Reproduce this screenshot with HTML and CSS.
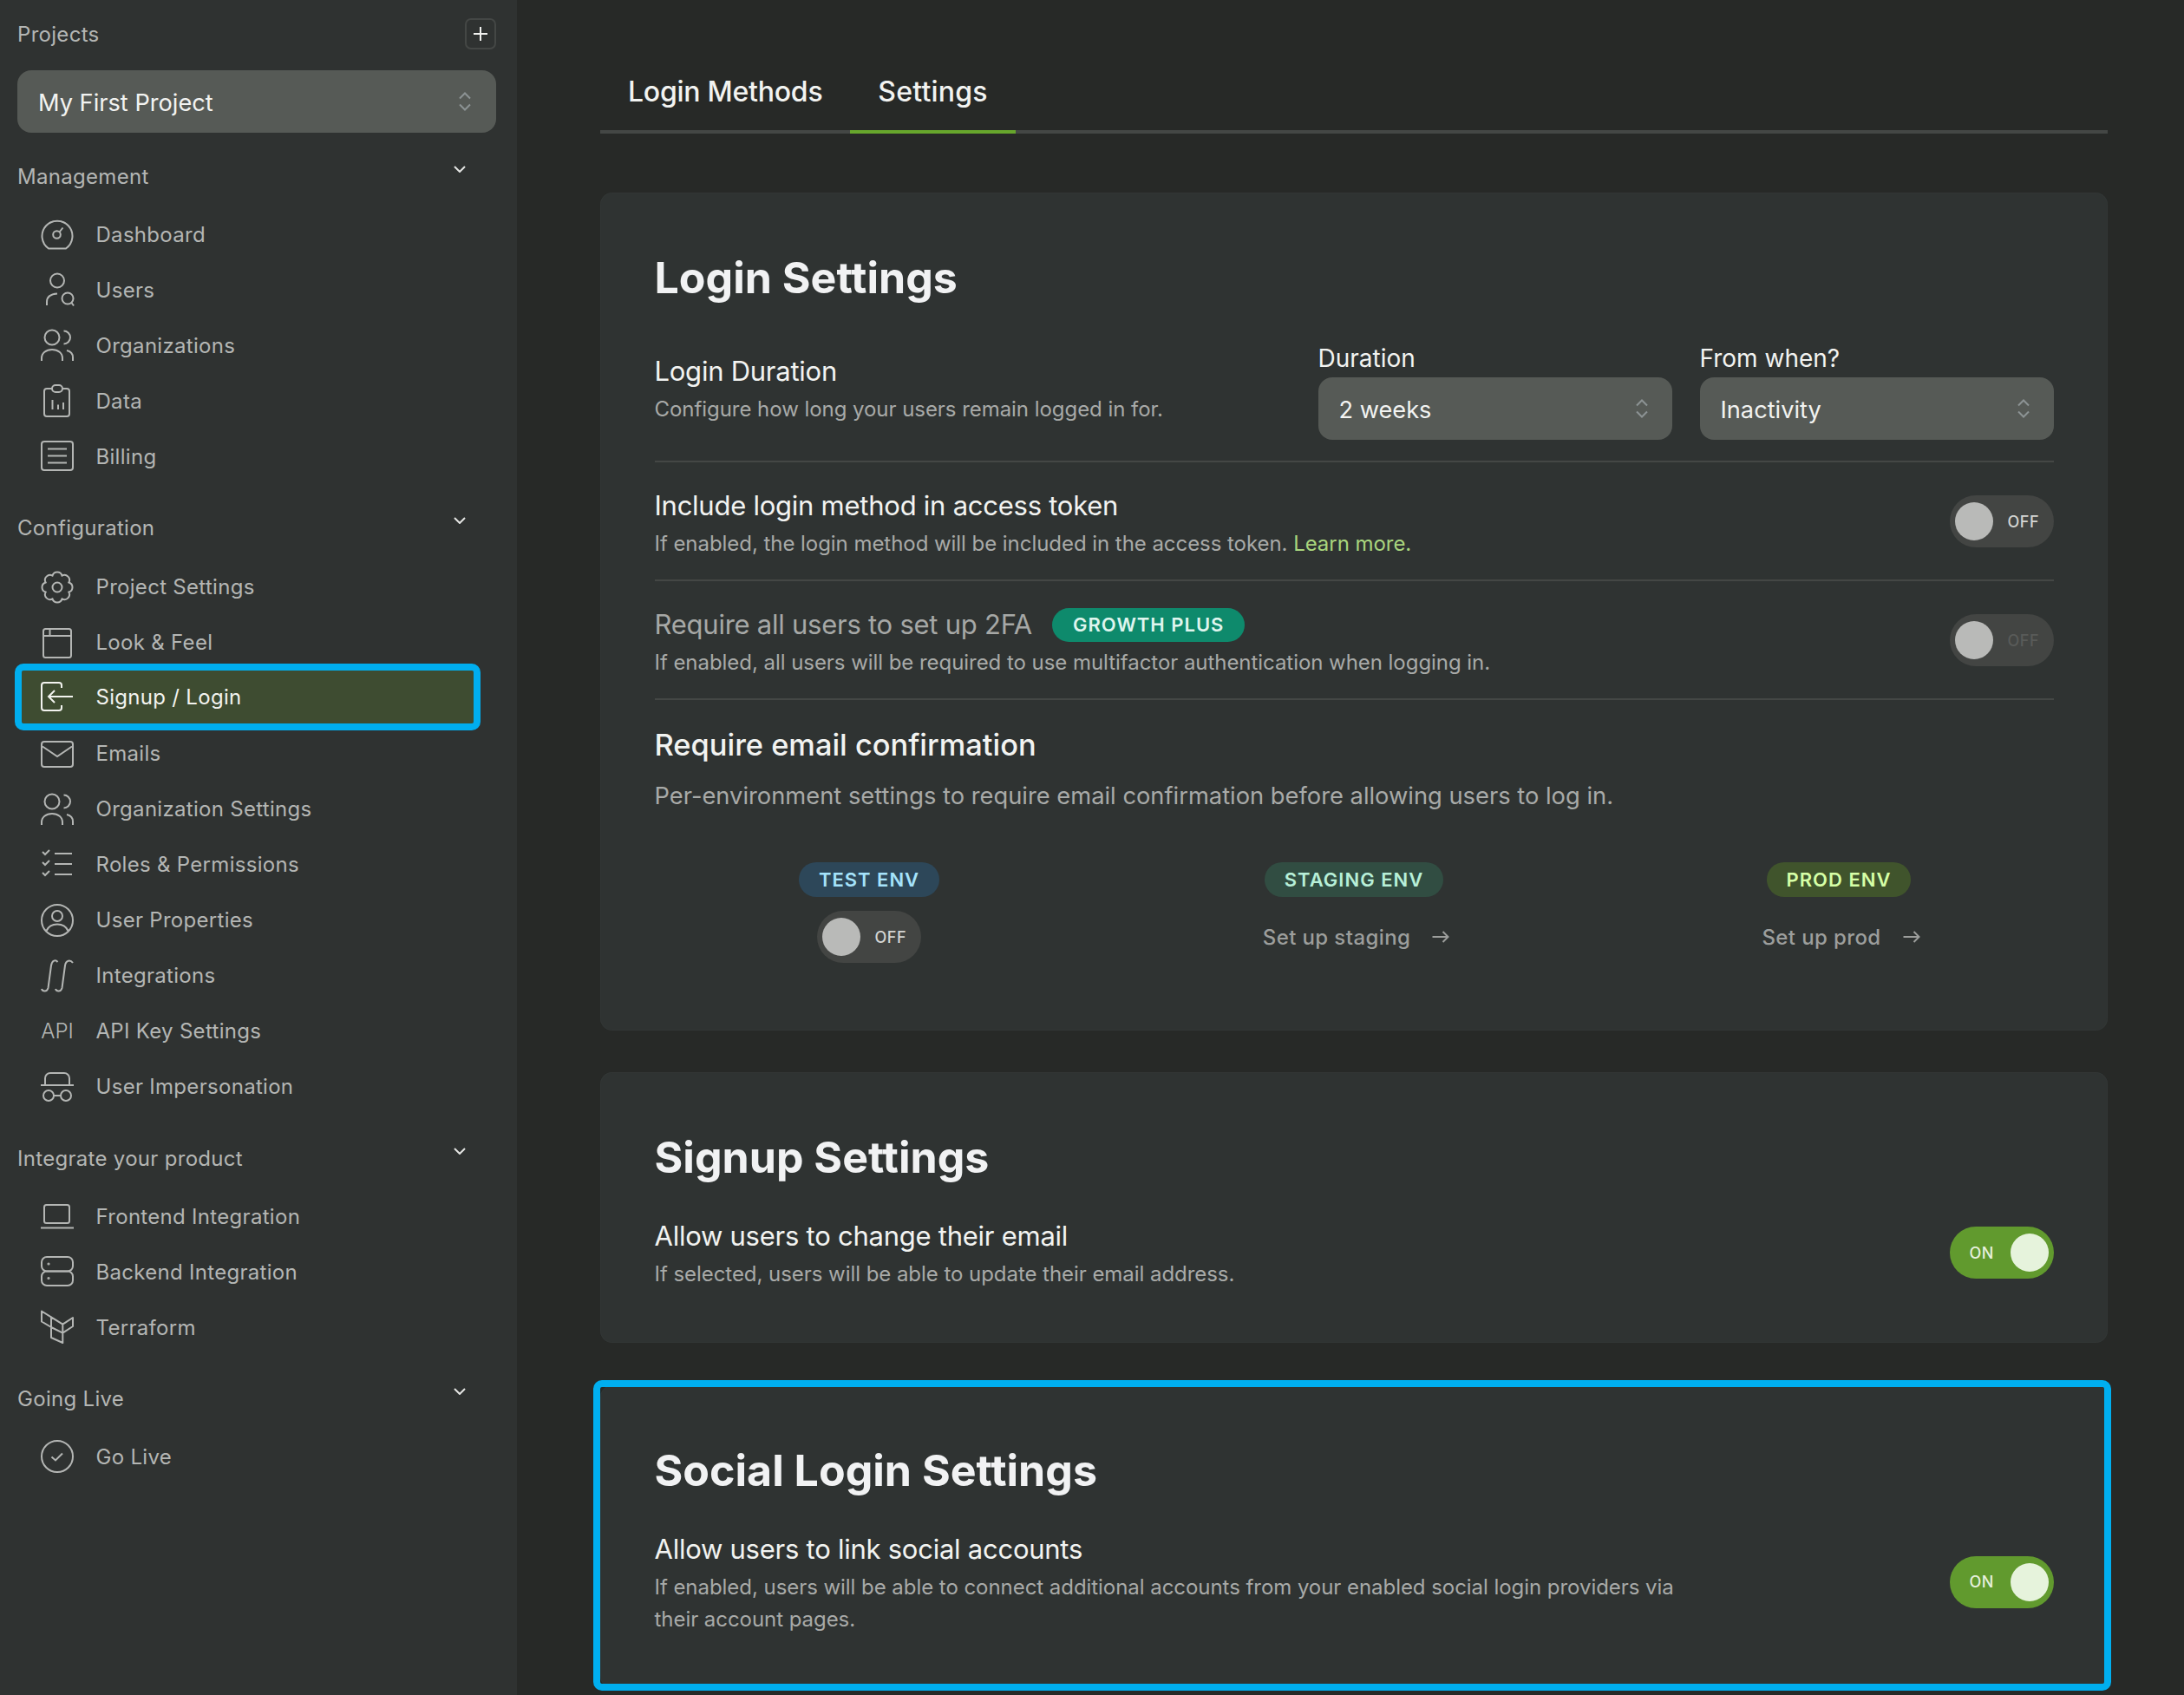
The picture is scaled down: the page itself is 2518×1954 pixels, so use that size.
FILE: index.html
```html
<!DOCTYPE html>
<html lang="en">
<head>
<meta charset="utf-8">
<title>Signup / Login Settings</title>
<link rel="stylesheet" href="styles.css">
</head>
<body>
<aside class="sidebar">
  <div class="projects-head">
    <span class="projects-label">Projects</span>
    <button class="add-btn"><svg viewBox="0 0 18 18" class="plus"><path d="M9 1V17M1 9H17"/></svg></button>
  </div>
  <div class="select select-project">
    <span>My First Project</span>
    <svg class="updown" viewBox="0 0 14 22"><path d="M1 7.5L7 1.5L13 7.5M1 14.500L7 20.500L13 14.500"/></svg>
  </div>

  <div class="section-head"><span>Management</span><svg class="chev" viewBox="0 0 14 8"><path d="M1 1L7 7L13 1"/></svg></div>
  <a class="nav"><svg class="ico" viewBox="0 0 38 38"><path d="M9 35.500A17.500 17.500 0 1 1 29 35.500Z"/><circle cx="18.500" cy="19.500" r="4.300"/><path d="M21.500 16.500L25.500 11.500"/></svg><span>Dashboard</span></a>
  <a class="nav"><svg class="ico" viewBox="0 0 38 38"><circle cx="19" cy="8.500" r="8"/><path d="M7 37V33C7 27 12 24 19 23.500"/><circle cx="31" cy="29" r="6.500"/><path d="M35.500 34L38 37.500"/></svg><span>Users</span></a>
  <a class="nav"><svg class="ico" viewBox="0 0 38 38"><circle cx="13" cy="10" r="8.500"/><path d="M26.500 2.500A7.500 7.500 0 0 1 26.500 17.500M1 37V34C1 28 6 24 13 24S25 28 25 34V37M30 25C34 26 37 29 37 33V37"/></svg><span>Organizations</span></a>
  <a class="nav"><svg class="ico" viewBox="0 0 38 38"><path d="M13 5H7A3 3 0 0 0 4 8V34A3 3 0 0 0 7 37H30A3 3 0 0 0 33 34V8A3 3 0 0 0 30 5H25"/><rect x="13" y="1" width="12" height="8" rx="4"/><path d="M13.500 18V29M20 23.500V29M26 21V29"/></svg><span>Data</span></a>
  <a class="nav"><svg class="ico" viewBox="0 0 38 38"><rect x="1" y="2" width="36" height="33" rx="3"/><path d="M8 10.500H30M8 18.500H30M8 26.500H30"/></svg><span>Billing</span></a>

  <div class="section-head section-config"><span>Configuration</span><svg class="chev" viewBox="0 0 14 8"><path d="M1 1L7 7L13 1"/></svg></div>
  <a class="nav"><svg class="ico" viewBox="0 0 38 38"><path d="M13.450 5.600A5.800 5.800 0 0 1 24.550 5.600A5.800 5.800 0 0 1 32.400 13.450A5.800 5.800 0 0 1 32.400 24.550A5.800 5.800 0 0 1 24.550 32.400A5.800 5.800 0 0 1 13.450 32.400A5.800 5.800 0 0 1 5.600 24.550A5.800 5.800 0 0 1 5.600 13.450A5.800 5.800 0 0 1 13.450 5.600Z"/><circle cx="19" cy="19" r="5.500"/></svg><span>Project Settings</span></a>
  <a class="nav"><svg class="ico" viewBox="0 0 38 38"><rect x="3" y="3" width="32" height="33" rx="2.500"/><path d="M3 11H35M10.500 3V11"/></svg><span>Look &amp; Feel</span></a>
  <a class="nav nav-active"><svg class="ico" viewBox="0 0 38 38"><path d="M24 9V6A3 3 0 0 0 21 3H4A3 3 0 0 0 1 6V32A3 3 0 0 0 4 35H21A3 3 0 0 0 24 32V29M37 19H9M16 12L9 19L16 26"/></svg><span>Signup / Login</span></a>
  <a class="nav"><svg class="ico" viewBox="0 0 38 38"><rect x="1" y="5" width="36" height="29" rx="3"/><path d="M2 10.500L19 22L36 10.500"/></svg><span>Emails</span></a>
  <a class="nav"><svg class="ico" viewBox="0 0 38 38"><circle cx="13" cy="10" r="8.500"/><path d="M26.500 2.500A7.500 7.500 0 0 1 26.500 17.500M1 37V34C1 28 6 24 13 24S25 28 25 34V37M30 25C34 26 37 29 37 33V37"/></svg><span>Organization Settings</span></a>
  <a class="nav"><svg class="ico" viewBox="0 0 38 38"><path d="M2 4L5 7L10 2M2 16L5 19L10 14M2 28L5 31L10 26M16 6H36M16 18H36M16 30H36"/></svg><span>Roles &amp; Permissions</span></a>
  <a class="nav"><svg class="ico" viewBox="0 0 38 38"><circle cx="19" cy="19" r="18"/><circle cx="19" cy="14" r="6"/><path d="M6.500 31C9 25.500 14 23.500 19 23.500S29 25.500 31.500 31"/></svg><span>User Properties</span></a>
  <a class="nav"><svg class="ico" viewBox="0 0 38 38"><path d="M1 34C2 37 7 38 8.500 33L12 7C13 1 17 0 19.500 3M17 34C18 37 23 38 24.500 33L28 7C29 1 34 0 37 4"/></svg><span>Integrations</span></a>
  <a class="nav"><span class="ico ico-text">API</span><span>API Key Settings</span></a>
  <a class="nav"><svg class="ico" viewBox="0 0 38 38"><path d="M5 16V9A6 6 0 0 1 11 3H27A6 6 0 0 1 33 9V16M0 17H38M15 29H23"/><circle cx="9" cy="29" r="6"/><circle cx="29" cy="29" r="6"/></svg><span>User Impersonation</span></a>

  <div class="section-head"><span>Integrate your product</span><svg class="chev" viewBox="0 0 14 8"><path d="M1 1L7 7L13 1"/></svg></div>
  <a class="nav"><svg class="ico" viewBox="0 0 38 38"><rect x="4" y="6" width="29" height="21" rx="2.500"/><path d="M0 32.500H38"/></svg><span>Frontend Integration</span></a>
  <a class="nav"><svg class="ico" viewBox="0 0 38 38"><rect x="1" y="2" width="36" height="16.500" rx="6"/><rect x="1" y="18.500" width="36" height="16.500" rx="6"/><circle class="dot" cx="9" cy="10" r=".6"/><circle class="dot" cx="9" cy="26.500" r=".6"/></svg><span>Backend Integration</span></a>
  <a class="nav"><svg class="ico ico-round" viewBox="0 0 38 38"><path d="M1 0.500L12 7.300V19L1 12.500ZM12 7.300L25.300 15.700V25.700L12 19M25.300 15.700L37 8V18L25.300 25.700M12 19V31L25.300 37V25.700"/></svg><span>Terraform</span></a>

  <div class="section-head"><span>Going Live</span><svg class="chev" viewBox="0 0 14 8"><path d="M1 1L7 7L13 1"/></svg></div>
  <a class="nav"><svg class="ico" viewBox="0 0 38 38"><circle cx="19" cy="19" r="18"/><path d="M12.500 19.500L17 23.500L25 15.500"/></svg><span>Go Live</span></a>
</aside>

<main class="main">
  <nav class="tabs">
    <a class="tab">Login Methods</a>
    <a class="tab tab-active">Settings</a>
  </nav>

  <section class="card card-login">
    <h2 class="card-title">Login Settings</h2>
    <div class="row row-duration">
      <div class="row-text row-text-lift">
        <div class="row-title">Login Duration</div>
        <div class="row-desc">Configure how long your users remain logged in for.</div>
      </div>
      <div class="fields">
        <div class="field">
          <label class="field-label">Duration</label>
          <div class="select"><span>2 weeks</span><svg class="updown" viewBox="0 0 14 22"><path d="M1 7.500L7 1.500L13 7.500M1 14.500L7 20.500L13 14.500"/></svg></div>
        </div>
        <div class="field">
          <label class="field-label">From when?</label>
          <div class="select"><span>Inactivity</span><svg class="updown" viewBox="0 0 14 22"><path d="M1 7.500L7 1.500L13 7.500M1 14.500L7 20.500L13 14.500"/></svg></div>
        </div>
      </div>
    </div>
    <div class="row row-toggle">
      <div class="row-text">
        <div class="row-title">Include login method in access token</div>
        <div class="row-desc">If enabled, the login method will be included in the access token. <a class="link">Learn more.</a></div>
      </div>
      <div class="toggle toggle-off"><span class="knob"></span><span class="toggle-text">OFF</span></div>
    </div>
    <div class="row row-toggle">
      <div class="row-text">
        <div class="row-title row-title-disabled">Require all users to set up 2FA <span class="plan-badge">GROWTH PLUS</span></div>
        <div class="row-desc">If enabled, all users will be required to use multifactor authentication when logging in.</div>
      </div>
      <div class="toggle toggle-off toggle-disabled"><span class="knob"></span><span class="toggle-text">OFF</span></div>
    </div>
    <div class="email-block">
      <h3 class="email-title">Require email confirmation</h3>
      <p class="email-desc">Per-environment settings to require email confirmation before allowing users to log in.</p>
      <div class="envs">
        <div class="env">
          <span class="env-badge env-test">TEST ENV</span>
          <div class="env-action"><div class="toggle toggle-off"><span class="knob"></span><span class="toggle-text">OFF</span></div></div>
        </div>
        <div class="env">
          <span class="env-badge env-staging">STAGING ENV</span>
          <div class="env-action"><a class="env-link">Set up staging<svg class="arrow" viewBox="0 0 20 14"><path d="M1 7H19M13 1L19 7L13 13"/></svg></a></div>
        </div>
        <div class="env">
          <span class="env-badge env-prod">PROD ENV</span>
          <div class="env-action"><a class="env-link">Set up prod<svg class="arrow" viewBox="0 0 20 14"><path d="M1 7H19M13 1L19 7L13 13"/></svg></a></div>
        </div>
      </div>
    </div>
  </section>

  <section class="card card-simple">
    <h2 class="card-title">Signup Settings</h2>
    <div class="row row-simple">
      <div class="row-text">
        <div class="row-title">Allow users to change their email</div>
        <div class="row-desc">If selected, users will be able to update their email address.</div>
      </div>
      <div class="toggle toggle-on"><span class="toggle-text">ON</span><span class="knob"></span></div>
    </div>
  </section>

  <section class="card card-simple card-framed">
    <h2 class="card-title">Social Login Settings</h2>
    <div class="row row-simple">
      <div class="row-text row-text-narrow">
        <div class="row-title">Allow users to link social accounts</div>
        <div class="row-desc">If enabled, users will be able to connect additional accounts from your enabled social login providers via their account pages.</div>
      </div>
      <div class="toggle toggle-on"><span class="toggle-text">ON</span><span class="knob"></span></div>
    </div>
  </section>
</main>
</body>
</html>
```
FILE: styles.css
```css
* { box-sizing: border-box; }
html, body { margin: 0; padding: 0; }
body {
  width: 2518px;
  height: 1954px;
  overflow: hidden;
  display: flex;
  background: #272927;
  font-family: Inter, "Liberation Sans", sans-serif;
  color: #f2f3f1;
}
a { color: inherit; text-decoration: none; }
h2, h3, p { margin: 0; }

/* sidebar */
.sidebar {
  width: 596px;
  flex: none;
  height: 100%;
  background: #2f3231;
  padding-top: 21px;
}
.projects-head {
  display: flex;
  align-items: center;
  justify-content: space-between;
  height: 36px;
  padding: 0 24px 0 20px;
}
.projects-label { font-size: 24px; color: #b4b6b4; letter-spacing: .3px; }
.add-btn {
  width: 36px;
  height: 36px;
  padding: 0;
  display: flex;
  align-items: center;
  justify-content: center;
  background: transparent;
  border: 2px solid #444745;
  border-radius: 7px;
}
.plus { width: 18px; height: 18px; fill: none; stroke: #f0f1ef; stroke-width: 2; }

.select {
  height: 72px;
  display: flex;
  align-items: center;
  justify-content: space-between;
  padding: 2px 28px 0 24px;
  background: #565a56;
  border-radius: 16px;
  color: #f2f3f1;
  font-size: 27.2px;
}
.select .updown { margin-top: -2px; }
.select-project { margin: 24px 24px 0 20px; padding-right: 29px; }
.updown { width: 14px; height: 22px; fill: none; stroke: #8c9394; stroke-width: 2; }

.section-head {
  height: 85.2px;
  padding: 39px 59px 0 20px;
  display: flex;
  justify-content: space-between;
  align-items: flex-start;
  font-size: 24px;
  line-height: 24px;
  color: #b4b6b4;
  letter-spacing: .3px;
}
.section-config { height: 86.8px; }
.chev { width: 14px; height: 8px; margin-top: -1px; fill: none; stroke: #e4e5e3; stroke-width: 2; }

.nav {
  width: 521px;
  height: 64px;
  margin-left: 25px;
  padding-left: 22px;
  display: flex;
  align-items: center;
  gap: 25.5px;
  font-size: 24px;
  color: #b4b6b4;
  letter-spacing: .3px;
}
.ico { width: 38px; height: 38px; flex: none; fill: none; stroke: #b4b6b4; stroke-width: 2; overflow: visible; }
.ico-round { stroke-linejoin: round; }
.ico-text {
  display: flex;
  align-items: center;
  justify-content: center;
  font-size: 24px;
  font-weight: 300;
  letter-spacing: 0;
}
.dot { fill: #b4b6b4; }
.nav-active {
  height: 61px;
  margin-bottom: 3px;
  background: #3e4c31;
  color: #f2f3ef;
  border-radius: 2px;
  outline: 8px solid #00aeef;
  position: relative;
}
.nav-active .ico { stroke: #f2f3ef; }

/* main */
.main {
  width: 1738px;
  margin-left: 96px;
  padding-top: 60px;
  flex: none;
}
.tabs {
  display: flex;
  border-bottom: 4px solid #444745;
  margin-bottom: 68px;
}
.tab {
  height: 94px;
  margin-bottom: -4px;
  padding: 26px 32px 0;
  font-size: 32px;
  line-height: 40px;
  font-weight: 500;
  letter-spacing: -.25px;
  color: #f2f3f1;
  border-bottom: 4px solid transparent;
}
.tab-active { border-bottom-color: #67a62c; letter-spacing: .2px; }

.card {
  background: #2f3332;
  border-radius: 14px;
  padding: 0 62.5px;
  box-shadow: inset 0 0 0 1px #323635;
}
.card + .card { margin-top: 48px; }
.card-framed { position: relative; margin-top: 49px !important; }
.card-framed::after {
  content: "";
  position: absolute;
  top: -6px;
  left: -8px;
  right: -4px;
  bottom: -3px;
  border: 8px solid #00aeef;
  border-radius: 10px;
  pointer-events: none;
}
.card-title {
  padding-top: 64px;
  font-size: 50.1px;
  line-height: 68px;
  font-weight: 700;
  color: #f1f2f3;
}
.row {
  display: flex;
  justify-content: space-between;
  align-items: center;
}
.row-duration {
  padding: 40px 0 24px;
  border-bottom: 2px solid #444745;
}
.row-toggle {
  padding: 30px 0 23px;
  border-bottom: 2px solid #444745;
}
.row-toggle .toggle { margin-top: -6px; }
.row-simple { padding: 37px 0 61px; }
.row-text-lift { padding-bottom: 3px; }
.row-text-narrow { max-width: 1195px; }
.row-title { font-size: 31px; line-height: 40px; letter-spacing: -.25px; color: #f2f3f1; }
.row-title-disabled { color: #a6a8a6; display: flex; align-items: center; gap: 23px; }
.row-desc {
  margin-top: 5px;
  font-size: 24px;
  line-height: 37px;
  color: #a8aaa8;
  letter-spacing: -.05px;
}
.link { color: #a9d67e; }
.plan-badge {
  height: 39px;
  padding: 0 24px;
  display: inline-flex;
  align-items: center;
  border-radius: 20px;
  background: #0e8a6c;
  color: #dff5ee;
  font-size: 22px;
  font-weight: 600;
  letter-spacing: 1px;
}
.fields { display: flex; gap: 32px; }
.field { width: 408px; }
.field-label { display: block; font-size: 28px; line-height: 38px; margin-bottom: 3px; color: #f2f3f1; }

.toggle {
  width: 120px;
  height: 60px;
  flex: none;
  margin-top: -4px;
  border-radius: 30px;
  display: flex;
  align-items: center;
  font-size: 18px;
  font-weight: 500;
  letter-spacing: .5px;
}
.knob { width: 44px; height: 44px; border-radius: 50%; flex: none; }
.toggle-off { background: #434543; padding-left: 6px; }
.toggle-off .knob { background: #b9bab8; }
.toggle-off .toggle-text { margin-left: 17px; color: #d4d5d3; }
.toggle-disabled .toggle-text { color: #595b59; }
.toggle-on { background: #619a2e; padding: 0 6px 0 23px; justify-content: space-between; }
.toggle-on .knob { background: #e6f3dc; }
.toggle-on .toggle-text { color: #e6f0de; }

.email-block { padding: 29px 0 78px; }
.email-title { font-size: 34.4px; line-height: 46px; font-weight: 500; color: #f2f3f1; }
.email-desc { margin-top: 16px; font-size: 27.3px; line-height: 40px; color: #a8aaa8; }
.envs {
  display: grid;
  grid-template-columns: repeat(3, 495px);
  gap: 64px;
  margin-top: 56px;
}
.env { display: flex; flex-direction: column; align-items: center; }
.env-badge {
  height: 40px;
  padding: 0 23px;
  display: flex;
  align-items: center;
  border-radius: 20px;
  font-size: 22px;
  font-weight: 600;
  letter-spacing: 1px;
}
.env-test { background: #2d4759; color: #a5e3fb; }
.env-staging { background: #314d42; color: #b7efd8; }
.env-prod { background: #40542c; color: #d5ffa6; }
.env-action { height: 60px; margin-top: 16px; display: flex; align-items: center; }
.env-action .toggle { margin: 0 1px 0 0; }
.env-link {
  display: flex;
  align-items: center;
  gap: 24px;
  margin-left: 5px;
  font-size: 24px;
  font-weight: 500;
  color: #9c9e9c;
  letter-spacing: .4px;
}
.arrow { width: 21px; height: 14px; fill: none; stroke: #9c9e9c; stroke-width: 2; }
```
